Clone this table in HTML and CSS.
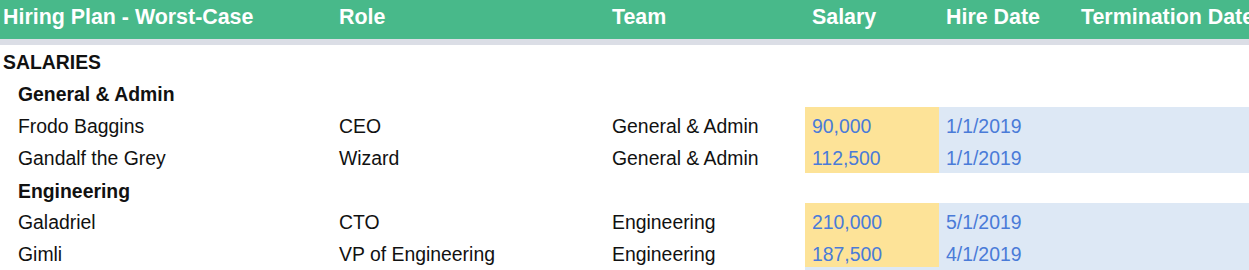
FILE: index.html
```html
<!DOCTYPE html>
<html>
<head>
<meta charset="utf-8">
<link rel="stylesheet" href="styles.css">
</head>
<body>
<div class="sheet">
  <div class="row head">
    <div class="c first">Hiring Plan - Worst-Case</div>
    <div class="c">Role</div>
    <div class="c">Team</div>
    <div class="c">Salary</div>
    <div class="c">Hire Date</div>
    <div class="c">Termination Date</div>
  </div>
  <div class="rule"></div>
  <div class="row r-top bold">
    <div class="c first">SALARIES</div>
  </div>
  <div class="row r-group bold">
    <div class="c sub">General &amp; Admin</div>
  </div>
  <div class="row r-tall">
    <div class="c sub">Frodo Baggins</div>
    <div class="c">CEO</div>
    <div class="c">General &amp; Admin</div>
    <div class="c input">90,000</div>
    <div class="c date">1/1/2019</div>
    <div class="c date"></div>
  </div>
  <div class="row r-tall r-lift">
    <div class="c sub">Gandalf the Grey</div>
    <div class="c">Wizard</div>
    <div class="c">General &amp; Admin</div>
    <div class="c input">112,500</div>
    <div class="c date">1/1/2019</div>
    <div class="c date"></div>
  </div>
  <div class="row r-short bold">
    <div class="c sub">Engineering</div>
  </div>
  <div class="row r-group">
    <div class="c sub">Galadriel</div>
    <div class="c">CTO</div>
    <div class="c">Engineering</div>
    <div class="c input">210,000</div>
    <div class="c date">5/1/2019</div>
    <div class="c date"></div>
  </div>
  <div class="row r-group">
    <div class="c sub">Gimli</div>
    <div class="c">VP of Engineering</div>
    <div class="c">Engineering</div>
    <div class="c input">187,500</div>
    <div class="c date">4/1/2019</div>
    <div class="c date"></div>
  </div>
  <div class="row r-group">
    <div class="c sub"></div>
    <div class="c"></div>
    <div class="c"></div>
    <div class="c date"></div>
    <div class="c date"></div>
    <div class="c date"></div>
  </div>
</div>
</body>
</html>
```

FILE: styles.css
```css
html, body {
  margin: 0;
  padding: 0;
  background: #ffffff;
  overflow: hidden;
}

.sheet {
  width: 1249px;
  font-family: "Liberation Sans", Arial, sans-serif;
  font-size: 19.4px;
  color: #111111;
}

.row {
  display: grid;
  grid-template-columns: 332px 273px 200px 134px 135px 1fr;
  align-items: stretch;
}

.c {
  padding: 0 0 3px 7px;
  line-height: 22px;
  white-space: nowrap;
  overflow: hidden;
  display: flex;
  align-items: flex-end;
}

.c.first {
  padding-left: 3px;
}

.c.sub {
  padding-left: 18px;
}

.head {
  height: 39px;
  background: #48b98a;
  color: #ffffff;
  font-weight: bold;
  font-size: 21.4px;
}

.head .c {
  align-items: flex-start;
  padding: 5px 0 0 7px;
  line-height: 24px;
}

.head .c.first {
  padding-left: 3px;
}

.rule {
  height: 6px;
  background: #dbdee6;
}

.r-top { height: 30px; }
.r-top .c { padding-bottom: 2px; }

.r-short { height: 30px; }
.r-short .c { padding-bottom: 1px; }

.r-group { height: 32px; }
.r-group .c { padding-bottom: 2px; }

.r-tall { height: 33px; }
.r-lift .c { padding-bottom: 4px; }

.bold {
  font-weight: bold;
}

.input {
  background: #fde398;
  color: #4a7bd8;
}

.date {
  background: #dde8f5;
  color: #4a7bd8;
}
```
